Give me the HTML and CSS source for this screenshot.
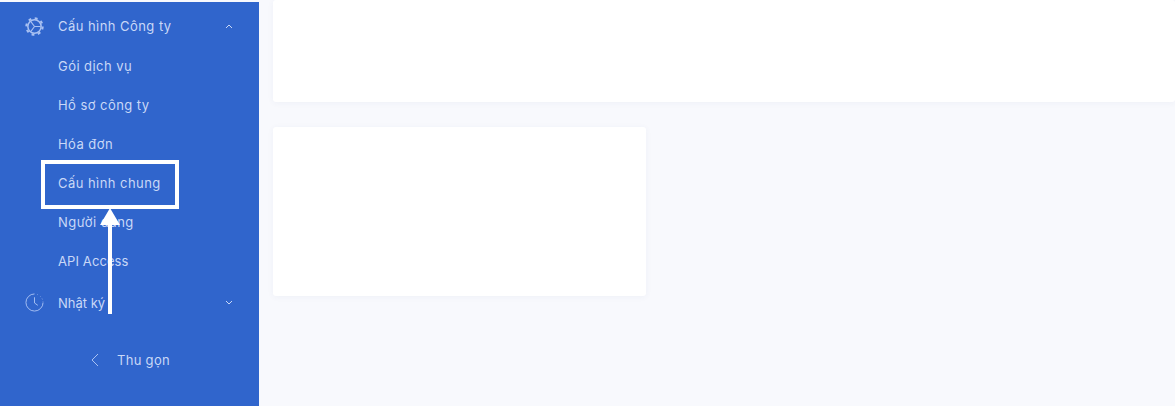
FILE: index.html
```html
<!DOCTYPE html>
<html lang="en">
<head>
    <meta charset="UTF-8">
    <title>Cấu hình chung</title>
    <link rel="stylesheet" href="styles.css">
</head>
<body>
    <div class="layout">
        <aside class="sidebar">
            <div class="menu-head">
                <svg class="menu-icon" viewBox="0 0 20 20" fill="none" stroke="currentColor">
                    <circle cx="10" cy="10" r="8.600" stroke-width="2.200" stroke-dasharray="3 3.750"/>
                    <circle cx="10" cy="10" r="7" stroke-width="1.600"/>
                    <path stroke-width="1.200" d="M10 10 6.200 4.800M10 10h6.500M10 10l-3.800 5.200"/>
                </svg>
                <span class="menu-label">Cấu hình Công ty</span>
                <svg class="caret" viewBox="0 0 8 5" fill="none" stroke="currentColor" stroke-width="1"><path d="M1 4l3-3 3 3"/></svg>
            </div>
            <ul class="submenu">
                <li>Gói dịch vụ</li>
                <li>Hồ sơ công ty</li>
                <li>Hóa đơn</li>
                <li>Cấu hình chung</li>
                <li>Người dùng</li>
                <li class="item-caps">API Access</li>
            </ul>
            <div class="menu-head menu-head-log">
                <svg class="menu-icon" viewBox="0 0 20 20" fill="none" stroke="currentColor" stroke-width="1">
                    <path d="M10 1a9 9 0 1 0 9 9"/>
                    <path d="M13 1.600l.5.200M15.800 3.200l.4.400M18 6l.3.600M18.900 8.800v.4"/>
                    <path d="M10 4.500V10.500l3.500 2.500"/>
                </svg>
                <span class="menu-label menu-label-short">Nhật ký</span>
                <svg class="caret" viewBox="0 0 8 5" fill="none" stroke="currentColor" stroke-width="1"><path d="M1 1l3 3 3-3"/></svg>
            </div>
            <div class="collapse">
                <svg class="collapse-icon" viewBox="0 0 8 14" fill="none" stroke="currentColor" stroke-width="1"><path d="M7 1 1 7l6 6"/></svg>
                <span>Thu gọn</span>
            </div>
            <div class="mark-box"></div>
            <svg class="mark-arrow" viewBox="0 0 24 106" fill="#fff">
                <path d="M12 0 22 17H14V106H10V17H2z"/>
            </svg>
        </aside>
        <main class="content">
            <div class="card card-wide"></div>
            <div class="card card-small"></div>
        </main>
    </div>
</body>
</html>
```

FILE: styles.css
```css
html, body {
    margin: 0;
    height: 100%;
    overflow: hidden;
}
body {
    font-family: Inter, "Noto Sans", sans-serif;
    background-color: #f8f9fd;
}
.layout {
    display: flex;
    height: 406px;
}
.sidebar {
    position: relative;
    box-sizing: border-box;
    width: 259px;
    margin-top: 2px;
    padding-top: 4px;
    background-color: #3065cc;
    color: #c9d8f7;
    font-size: 13px;
    letter-spacing: 0.45px;
}
.menu-head {
    display: flex;
    align-items: center;
    height: 40px;
    padding-left: 24px;
}
.menu-head-log {
    margin-top: 1px;
    height: 41px;
}
.menu-icon {
    width: 19px;
    height: 19px;
    margin-left: 1px;
    margin-right: 14px;
    flex: none;
    color: #a9c1f2;
}
.menu-label {
    flex: 1;
}
.menu-label-short {
    letter-spacing: 0;
}
.caret {
    width: 8px;
    height: 5px;
    margin-right: 26px;
}
.submenu {
    list-style: none;
    margin: 0;
    padding: 1px 0 0 58px;
}
.submenu li {
    height: 39px;
    line-height: 39px;
}
.submenu .item-caps {
    letter-spacing: 0.1px;
}
.collapse {
    display: flex;
    align-items: center;
    height: 40px;
    margin-top: 17px;
    padding-left: 91px;
    letter-spacing: 0.3px;
}
.collapse-icon {
    width: 8px;
    height: 14px;
    margin-right: 18px;
    color: #a9c1f2;
}
.mark-box {
    position: absolute;
    left: 41px;
    top: 158px;
    width: 138px;
    height: 49px;
    box-sizing: border-box;
    border: 4px solid #fff;
}
.mark-arrow {
    position: absolute;
    left: 98px;
    top: 206px;
    width: 24px;
    height: 106px;
}
.content {
    flex: 1;
    padding-left: 14px;
}
.card {
    background-color: #fff;
    border-radius: 3px;
    box-shadow: 0 1px 6px rgba(60, 80, 140, 0.05);
}
.card-wide {
    height: 102px;
    margin-bottom: 25px;
}
.card-small {
    width: 373px;
    height: 169px;
}
```
